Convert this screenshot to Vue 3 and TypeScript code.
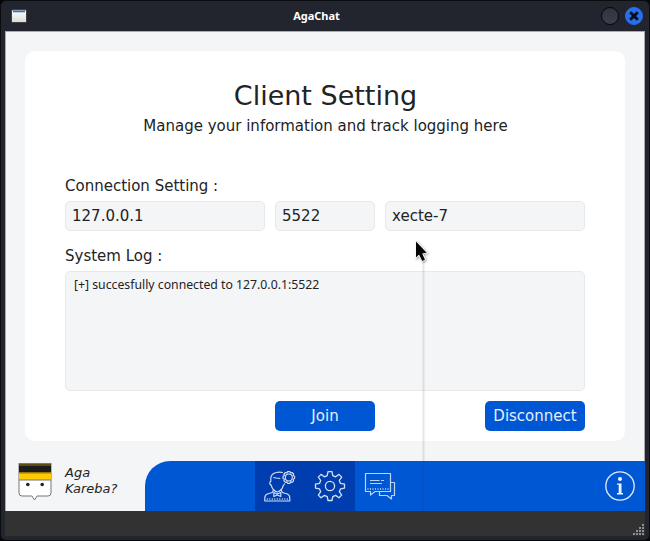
<script setup lang="ts">
import { ref } from 'vue'

const host = ref<string>('127.0.0.1')
const port = ref<string>('5522')
const nickname = ref<string>('xecte-7')
const log = ref<string>('[+] succesfully connected to 127.0.0.1:5522')
const gripRows: number[] = [1, 2, 3, 4]
</script>

<template>
  <div class="window">
    <header class="titlebar">
      <svg class="app-icon" width="16" height="14" viewBox="0 0 16 14">
        <defs>
          <linearGradient id="paper" x1="0" y1="0" x2="0" y2="1">
            <stop offset="0" stop-color="#ffffff" />
            <stop offset="1" stop-color="#dcddd6" />
          </linearGradient>
        </defs>
        <rect x="0.5" y="0.5" width="15" height="13" fill="#555b60" />
        <rect x="1" y="1" width="14" height="12" fill="url(#paper)" />
        <rect x="1" y="1" width="14" height="1" fill="#8f9db3" />
        <rect x="2" y="2" width="12" height="1" fill="#416fae" />
        <rect x="2" y="3" width="12" height="1" fill="#b9d1ee" />
      </svg>
      <h1 class="window-title">AgaChat</h1>
      <div class="controls">
        <span class="dot"></span>
        <span class="dot close">
          <svg width="16" height="16" viewBox="0 0 16 16">
            <path d="M4.200 4.200 L11.800 11.800 M11.800 4.200 L4.200 11.800" stroke="#080d1c" stroke-width="2.900" />
          </svg>
        </span>
      </div>
    </header>

    <main class="content">
      <section class="card">
        <h2 class="heading">Client Setting</h2>
        <p class="subtitle">Manage your information and track logging here</p>
        <p class="label connection">Connection Setting :</p>
        <div class="fields">
          <input v-model="host" class="field wide" />
          <input v-model="port" class="field" />
          <input v-model="nickname" class="field wide" />
        </div>
        <p class="label system">System Log :</p>
        <div class="log">{{ log }}</div>
        <div class="actions">
          <button class="button">Join</button>
          <button class="button">Disconnect</button>
        </div>
      </section>

      <footer class="bottom">
        <div class="brand">
          <svg class="logo" width="36" height="40" viewBox="-1 0 36 40">
            <path d="M1 17 V30 Q1 33 4 33 H14 L16.500 37 L19 33 H30 Q33 33 33 30 V17 Z" fill="#fff" stroke="#777" />
            <rect x="0.5" y="0" width="33" height="17" fill="#777" />
            <rect x="1" y="1" width="32" height="8" fill="#1d1c19" />
            <rect x="1" y="1.500" width="32" height="1" fill="#9b7d11" />
            <rect x="1" y="9" width="32" height="2" fill="#9b7800" />
            <rect x="1" y="10.500" width="32" height="6" fill="#ffcb05" />
            <circle cx="9.800" cy="21.500" r="1.800" fill="#222" />
            <circle cx="24.200" cy="21.500" r="1.800" fill="#222" />
          </svg>
          <p class="brand-name">Aga<br />Kareba?</p>
        </div>
        <nav class="nav">
          <button class="tab selected" aria-label="Account">
            <svg width="34" height="34" viewBox="0.7 0 34 34" fill="none" stroke="#d4e0f3" stroke-width="1.150" stroke-linejoin="round">
              <path d="M8.500 13 V9 Q9 4.500 14 3.500 Q17 2.800 20.500 3.500 M8.500 12.500 Q7 12.500 7.700 15 L9 16.500 Q10.500 22 15 23 Q19.500 22 21 16.500 L22.500 14.500 M11 8.500 L14 9 L18 9.500" />
              <path d="M11.500 20.500 L10 23.500 L5 25 Q2.500 26 2.500 29 V32 H27.500 V29 Q27.500 26 25 25 L20 23.500 L18.500 20.500" />
              <path d="M11.500 23.500 L15 25 L18.500 23.500 V27.500 L15 26 L11.500 27.500 Z" />
              <path d="M4.500 30 H26" stroke-width="2" stroke-dasharray="1 1.500" opacity=".75" />
              <circle cx="26.500" cy="8.500" r="3.500" />
              <path d="M25.300 2.600 h2.400 l.5 1.400 1.600-.5 1.500 1.500-.5 1.500 1.500.8v2.300l-1.500.7.5 1.600-1.500 1.500-1.600-.5-.5 1.500h-2.400l-.6-1.500-1.500.5-1.600-1.500.5-1.600-1.400-.7V7.300l1.400-.8-.5-1.500 1.600-1.500 1.500.5z" />
            </svg>
          </button>
          <button class="tab selected" aria-label="Settings">
            <svg width="34" height="34" viewBox="0 0 34 34" fill="none" stroke="#d4e0f3" stroke-width="1.300" stroke-linejoin="round">
              <circle cx="17" cy="17" r="4.600" />
              <path d="M15 2.600 h4 l.8 4 2.800 1.200 3.400-2.400 2.700 2.700-2.400 3.400 1.200 2.900 4 .7v4l-4 .8-1.200 2.800 2.400 3.400-2.700 2.700-3.400-2.400-2.800 1.200-.8 3.900h-4l-.8-3.900-2.800-1.200-3.400 2.400-2.700-2.700 2.400-3.400-1.200-2.800-4-.8v-4l4-.7 1.200-2.900-2.400-3.400L8 5.400l3.400 2.400 2.800-1.200z" />
            </svg>
          </button>
          <button class="tab" aria-label="Messages">
            <svg width="34" height="34" viewBox="0 0 34 34" fill="none" stroke="#bfd4f2" stroke-width="1.200" stroke-linejoin="round">
              <path d="M2.500 4.500 H27.500 V22.500 H12 L7.500 26 V22.500 H2.500 Z" />
              <path d="M28 13.500 H31.500 V26.500 H28.500 V30 L24 26.500 H16.500 V23" />
              <path d="M7 11.500 H16.500 M18 11.500 H21 M7 14.500 H19" />
              <path d="M4.500 20 H26" stroke-width="2" stroke-dasharray="1 1.500" opacity=".8" />
            </svg>
          </button>
          <button class="info" aria-label="Information">
            <svg width="32" height="32" viewBox="0 0 32 32">
              <circle cx="16" cy="16" r="14.200" fill="none" stroke="#e6eefb" stroke-width="1.300" />
              <circle cx="16" cy="9" r="2" fill="#f1f5fd" />
              <path d="M13 13.500 H17.500 V23 H19 V24.400 H13 V23 H14.700 V14.800 H13 Z" fill="#f1f5fd" />
            </svg>
          </button>
        </nav>
      </footer>
    </main>

    <div class="statusbar">
      <div class="grip">
        <div v-for="row in gripRows" :key="row" class="grip-row">
          <i v-for="dot in row" :key="dot"></i>
        </div>
      </div>
    </div>

    <div class="trail"></div>
    <svg class="cursor" width="16" height="26" viewBox="0 0 16 26">
      <path d="M2 1.500 V17.500 L5 14.600 L8.200 21 L11 19.700 L8.200 13.400 L12.700 12.700 Z" fill="#050505" stroke="#fff" stroke-width="1.600" paint-order="stroke" />
    </svg>
  </div>
</template>

<style>
body {
  background: #06070a;
  overflow: hidden;
}
</style>

<style scoped>
.window {
  position: relative;
  box-sizing: border-box;
  width: 650px;
  height: 541px;
  padding: 0 4px 4px;
  border: 1px solid #0b0c10;
  border-bottom-color: #05070a;
  border-radius: 6px;
  background: #22252e;
  color: #222324;
  font-family: "DejaVu Sans", sans-serif;
  font-size: 15px;
}
.titlebar {
  display: grid;
  grid-template-columns: 50px 1fr 50px;
  align-items: center;
  height: 30px;
}
.app-icon {
  margin-left: 6px;
}
.window-title {
  margin: 0;
  padding-right: 17px;
  color: #fff;
  font: 700 11px/18px "Noto Sans", sans-serif;
  text-align: center;
}
.controls {
  display: flex;
  justify-content: flex-end;
  gap: 6px;
  padding-right: 2px;
}
.dot {
  box-sizing: border-box;
  display: flex;
  align-items: center;
  justify-content: center;
  flex: none;
  width: 18px;
  height: 18px;
  border: 1px solid #050608;
  border-radius: 50%;
  background: linear-gradient(#303440, #3a3f4d);
}
.close {
  border-color: #286fed;
  background: #286fed;
}
.content {
  box-sizing: border-box;
  display: flex;
  flex-direction: column;
  height: 480px;
  padding-top: 19px;
  border: 1px solid #a9abad;
  border-bottom: 0;
  background: #f4f5f7;
}
.card {
  box-sizing: border-box;
  display: flex;
  flex-direction: column;
  flex: none;
  width: 600px;
  height: 390px;
  margin-left: 19px;
  padding: 25px 40px 10px;
  border-radius: 10px;
  background: #fff;
}
.heading {
  margin: 0;
  padding-left: 1px;
  font-size: 27px;
  font-weight: 400;
  line-height: 40px;
  text-align: center;
}
.subtitle {
  margin: 0;
  padding-left: 1px;
  line-height: 20px;
  text-align: center;
}
.label {
  margin: 0;
  line-height: 20px;
}
.connection {
  margin-top: 40px;
}
.system {
  margin-top: 15px;
}
.fields {
  display: flex;
  gap: 10px;
  margin-top: 5px;
}
.field {
  box-sizing: border-box;
  width: 100px;
  height: 30px;
  padding: 0 6px;
  border: 1px solid #e7e8ea;
  border-radius: 5px;
  outline: none;
  background: #f4f5f7;
  color: #222324;
  font: inherit;
}
.wide {
  width: 200px;
}
.log {
  box-sizing: border-box;
  height: 120px;
  margin-top: 5px;
  padding: 4px 8px;
  border: 1px solid #e7e8ea;
  border-radius: 5px;
  background: #f4f5f7;
  font: 12.250px/18px "Noto Sans", sans-serif;
}
.actions {
  display: flex;
  justify-content: space-between;
  margin-top: 10px;
  padding-left: 210px;
}
.button {
  width: 100px;
  height: 30px;
  padding: 0;
  border: 0;
  border-radius: 5px;
  background: #0057d4;
  color: #e6eefa;
  font: inherit;
}
.bottom {
  display: flex;
  flex: none;
  height: 50px;
  margin: 20px -1px 0;
}
.brand {
  display: flex;
  gap: 12px;
  width: 140px;
  padding-top: 2px;
  padding-left: 12px;
  box-sizing: border-box;
}
.brand-name {
  margin: 2px 0 0;
  font-size: 13px;
  font-style: italic;
  line-height: 16px;
}
.nav {
  display: flex;
  flex: 1;
  padding-left: 110px;
  border-top-left-radius: 25px;
  background: #0057d4;
}
.tab,
.info {
  display: flex;
  align-items: center;
  justify-content: center;
  width: 50px;
  height: 50px;
  padding: 0;
  border: 0;
  background: transparent;
}
.selected {
  background: #003eb0;
}
.info {
  margin-left: auto;
}
.statusbar {
  display: flex;
  align-items: flex-end;
  justify-content: flex-end;
  height: 25px;
  background: #323232;
}
.grip {
  display: flex;
  flex-direction: column;
  gap: 1px;
  padding: 0 1px 1px 0;
}
.grip-row {
  display: flex;
  justify-content: flex-end;
  gap: 1px;
}
.grip-row i {
  width: 2px;
  height: 2px;
  background: #8f8f8f;
}
.trail {
  position: absolute;
  top: 258px;
  left: 421px;
  width: 3px;
  height: 278px;
  background: linear-gradient(90deg, rgba(50, 50, 55, 0.03), rgba(50, 50, 55, 0.12), rgba(50, 50, 55, 0.03));
}
.cursor {
  position: absolute;
  top: 239px;
  left: 413px;
  filter: drop-shadow(1px 1px 1px rgba(0, 0, 0, 0.35));
}
</style>
